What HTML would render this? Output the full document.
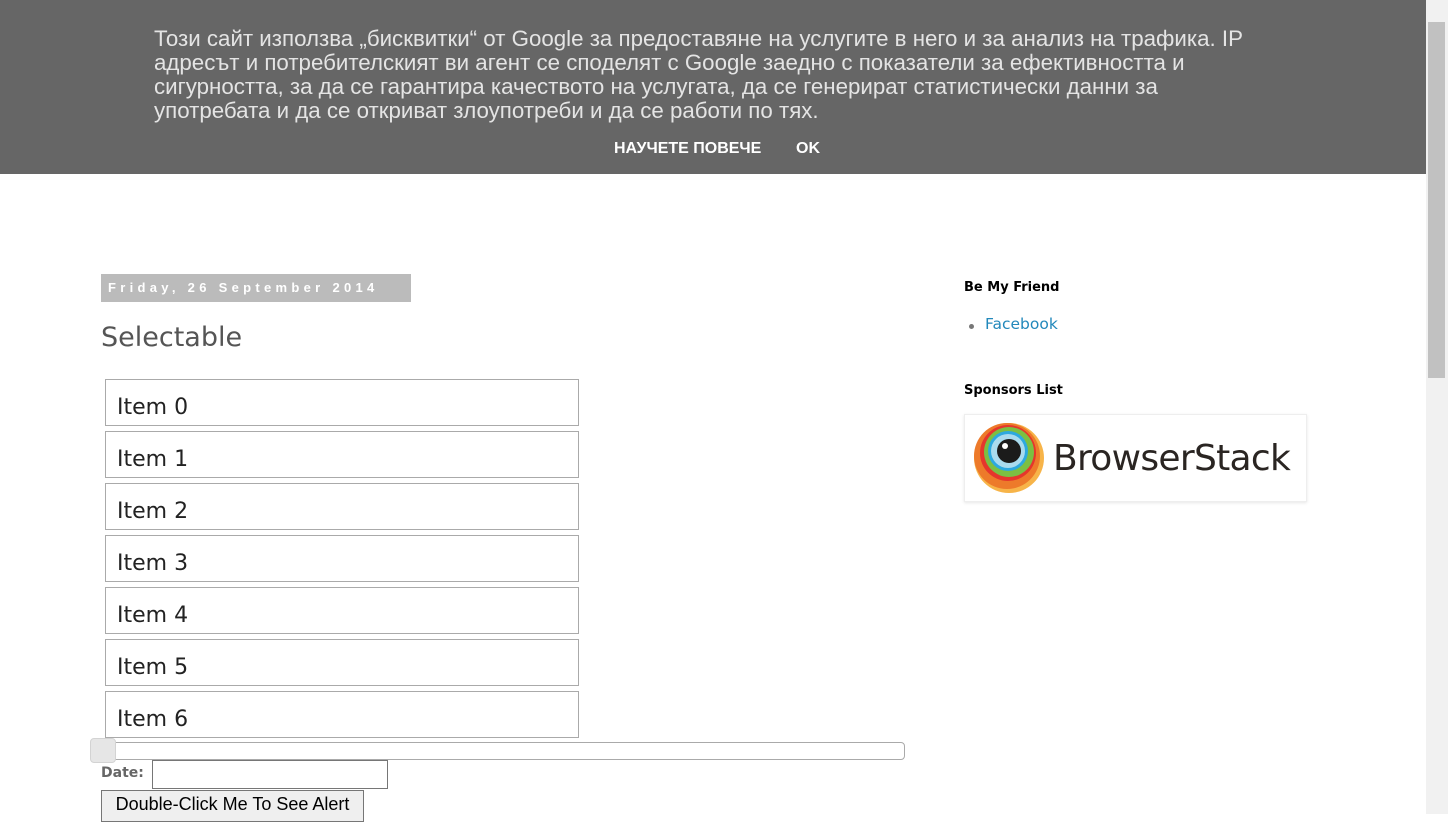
<!DOCTYPE html>
<html><head><meta charset="utf-8"><style>
body{margin:0;width:1448px;height:814px;overflow:hidden;background:#fff;font-family:"DejaVu Sans","Liberation Sans",sans-serif;position:relative}
.banner{position:absolute;left:0;top:0;width:1426px;height:174px;background:#666;color:#e4e4e4;font-family:"Liberation Sans",sans-serif}
.banner p{position:absolute;left:154px;top:27px;width:1110px;margin:0;font-size:22.3px;line-height:24px}
.banner .b{position:absolute;top:140px;font-weight:bold;font-size:16px;color:#fff}
.sb{position:absolute;right:0;top:0;width:22px;height:814px;background:#f1f1f1}
.sb .th{position:absolute;left:2px;top:22px;width:17px;height:356px;background:#c1c1c1}
.date{position:absolute;left:101px;top:274px;width:310px;height:28px;background:#bbb;color:#fff;font:bold 13px "Liberation Sans",sans-serif;letter-spacing:4.3px;line-height:28px;text-indent:7px}
h1{position:absolute;left:101px;top:322px;margin:0;font-weight:normal;font-size:27px;color:#555}
.item{position:absolute;left:105px;width:472px;height:45px;border:1px solid #aaa;font-size:22px;color:#222;box-sizing:content-box}
.item span{position:absolute;left:11px;top:15px}
.slider{position:absolute;left:90px;top:742px;width:813px;height:16px;border:1px solid #aaa;border-radius:4px}
.handle{position:absolute;left:90px;top:738px;width:24px;height:23px;background:#e6e6e6;border:1px solid #d3d3d3;border-radius:4px}
.lbl{position:absolute;left:101px;top:765px;font-size:14px;color:#666;font-weight:bold}
.inp{position:absolute;left:152px;top:760px;width:234px;height:27px;border:1px solid #767676}
.btn{position:absolute;left:101px;top:790px;width:261px;height:30px;border:1px solid #767676;background:#efefef;font:18px "Liberation Sans",sans-serif;text-align:center;line-height:27px;color:#000}
.side h3{position:absolute;left:964px;margin:0;font-size:13px;font-weight:bold;color:#000}
.fb{position:absolute;left:985px;top:315px;font-size:15.5px;color:#2288bb}
.dot{position:absolute;left:969px;top:324px;width:5px;height:5px;border-radius:50%;background:#777}
.logo{position:absolute;left:964px;top:414px;width:341px;height:86px;border:1px solid #eee;box-shadow:0 1px 3px rgba(0,0,0,.1)}
.logo span{position:absolute;left:88px;top:23px;font-size:36px;color:#2a2522;letter-spacing:-.7px}
</style></head><body>
<div class="banner"><p>Този сайт използва „бисквитки“ от Google за предоставяне на услугите в него и за анализ на трафика. IP адресът и потребителският ви агент се споделят с Google заедно с показатели за ефективността и сигурността, за да се гарантира качеството на услугата, да се генерират статистически данни за употребата и да се откриват злоупотреби и да се работи по тях.</p>
<span class="b" style="left:614px">НАУЧЕТЕ ПОВЕЧЕ</span><span class="b" style="left:796px">OK</span></div>
<div class="sb"><div class="th"></div></div>
<div class="date">Friday, 26 September 2014</div>
<h1>Selectable</h1>
<div class="item" style="top:379px"><span>Item 0</span></div>
<div class="item" style="top:431px"><span>Item 1</span></div>
<div class="item" style="top:483px"><span>Item 2</span></div>
<div class="item" style="top:535px"><span>Item 3</span></div>
<div class="item" style="top:587px"><span>Item 4</span></div>
<div class="item" style="top:639px"><span>Item 5</span></div>
<div class="item" style="top:691px"><span>Item 6</span></div>
<div class="slider"></div><div class="handle"></div>
<div class="lbl">Date:</div><div class="inp"></div>
<div class="btn">Double-Click Me To See Alert</div>
<div class="side"><h3 style="top:280px">Be My Friend</h3><h3 style="top:383px">Sponsors List</h3></div>
<div class="dot"></div><div class="fb">Facebook</div>
<div class="logo"><svg width="80" height="86" style="position:absolute;left:0;top:0">
<circle cx="44" cy="43" r="35" fill="#f7b449"/><circle cx="42" cy="41" r="33" fill="#ed7a2a"/><circle cx="43" cy="38" r="28" fill="#e5362c"/><circle cx="44" cy="37" r="25" fill="#7cbf42"/><circle cx="43" cy="36" r="20" fill="#2da9df"/><circle cx="43" cy="36" r="17" fill="#a9dbee"/><circle cx="44" cy="36" r="12" fill="#1b1b1b"/><circle cx="40" cy="31" r="3" fill="#fff"/></svg><span>BrowserStack</span></div>
</body></html>
